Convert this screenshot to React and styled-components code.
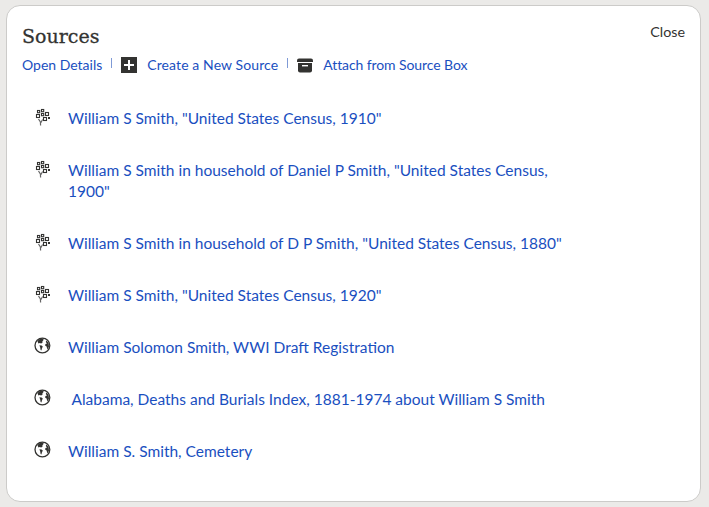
import styled, { createGlobalStyle } from 'styled-components';

const sources = [
    { icon: 'tree', text: 'William S Smith, "United States Census, 1910"' },
    { icon: 'tree', text: 'William S Smith in household of Daniel P Smith, "United States Census, 1900"' },
    { icon: 'tree', text: 'William S Smith in household of D P Smith, "United States Census, 1880"' },
    { icon: 'tree', text: 'William S Smith, "United States Census, 1920"' },
    { icon: 'globe', text: 'William Solomon Smith, WWI Draft Registration' },
    { icon: 'globe', text: '\u00a0Alabama, Deaths and Burials Index, 1881-1974 about William S Smith' },
    { icon: 'globe', text: 'William S. Smith, Cemetery' },
];

function TreeIcon() {
    return (
        <svg width="17" height="18" viewBox="0 0 17 18" fill="none" stroke="#333331" strokeWidth="1.1">
            <rect x="3.5" y="2.5" width="2.2" height="2.2" />
            <rect x="7.5" y="1.5" width="2.2" height="2.2" />
            <rect x="2.5" y="6.5" width="3" height="3" />
            <rect x="7.5" y="5.5" width="2.2" height="2.2" />
            <rect x="11.5" y="4.5" width="3" height="3" />
            <rect x="9.5" y="9.5" width="3" height="3" />
            <rect x="14" y="9" width="2" height="2" fill="#333331" stroke="none" />
            <path d="M4.5 11 L6.4 14 L6.6 17.5 M8.6 11.5 L6.8 14.8" stroke="#666" strokeWidth="1.2" />
        </svg>
    );
}

function GlobeIcon() {
    return (
        <svg width="17" height="17" viewBox="0 0 17 17">
            <circle cx="8.4" cy="8.5" r="7.4" fill="#fff" stroke="#333331" strokeWidth="1.3" />
            <path d="M3.4 4 L6 1.8 L9.6 1.6 L9.4 3.2 L8.4 4.2 L8.6 5.6 L7.2 6.6 L5.6 6 L4.4 6.4 Z" fill="#333331" />
            <path d="M5.4 8.2 L7.6 8.4 L8.8 9.6 L8 11.2 L7.4 13.4 L6.6 13 L6.2 10.4 Z" fill="#333331" />
            <path d="M12.2 3.4 L14.6 5.8 L15 9.4 L14 11.8 L13.2 12 L12.6 9.6 L11.2 8.8 L11.4 7 L13 6.4 L11.8 5 Z" fill="#333331" />
        </svg>
    );
}

function PlusIcon() {
    return (
        <svg width="16" height="16" viewBox="0 0 16 16">
            <rect width="16" height="16" fill="#333331" />
            <path d="M8 3v10M3 8h10" stroke="#fff" strokeWidth="2" />
        </svg>
    );
}

function BoxIcon() {
    return (
        <svg width="16" height="15" viewBox="0 0 16 15">
            <path d="M2 0.5 H14 Q16 0.5 16 2.5 V4 H0 V2.5 Q0 0.5 2 0.5 Z" fill="#333331" />
            <path d="M1 5 H15 V12.5 Q15 14.5 13 14.5 H3 Q1 14.5 1 12.5 Z" fill="#333331" />
            <rect x="5" y="7" width="6" height="1.4" fill="#fff" />
        </svg>
    );
}

function App() {
    return (
        <>
            <GlobalStyle />
            <Card>
                <Header>
                    <Title>Sources</Title>
                    <Close>Close</Close>
                </Header>
                <Actions>
                    <ActionLink>Open Details</ActionLink>
                    <Divider />
                    <IconSlot><PlusIcon /></IconSlot>
                    <ActionLink $track="0.1px">Create a New Source</ActionLink>
                    <Divider />
                    <IconSlot><BoxIcon /></IconSlot>
                    <ActionLink $track="-0.09px">Attach from Source Box</ActionLink>
                </Actions>
                <SourceList>
                    {sources.map((source) => (
                        <SourceRow key={source.text}>
                            <RowIcon>
                                {source.icon === 'tree' ? <TreeIcon /> : <GlobeIcon />}
                            </RowIcon>
                            <SourceLink>{source.text}</SourceLink>
                        </SourceRow>
                    ))}
                </SourceList>
            </Card>
        </>
    );
}

const GlobalStyle = createGlobalStyle`
    html, body {
        margin: 0;
        background: #ebeae8;
    }
    body {
        font-family: Lato, "Liberation Sans", sans-serif;
    }
`;

const Card = styled.div`
    box-sizing: border-box;
    width: 695px;
    height: 497px;
    margin: 5px 0 0 6px;
    padding: 17px 15px 0 15px;
    background: #fff;
    border: 1px solid #cccbc9;
    border-radius: 14px;
`;

const Header = styled.div`
    display: flex;
    justify-content: space-between;
    align-items: flex-start;
`;

const Title = styled.h2`
    margin: 0;
    font-family: "DejaVu Serif", serif;
    font-size: 19px;
    line-height: 26px;
    font-weight: 400;
    color: #333331;
    -webkit-text-stroke: 0.3px #333331;
`;

const Close = styled.span`
    font-size: 14.3px;
    line-height: 18px;
    color: #333331;
`;

const Actions = styled.div`
    display: flex;
    align-items: center;
    margin-top: 6px;
    height: 20px;
`;

const ActionLink = styled.a`
    font-size: 14px;
    line-height: 20px;
    color: #1a4fc0;
    letter-spacing: ${(props) => props.$track || 'normal'};
`;

const Divider = styled.span`
    width: 1px;
    height: 10px;
    margin: 0 9px 5px 9px;
    background: #7f9ad6;
`;

const IconSlot = styled.span`
    display: flex;
    width: 16px;
    margin-right: 10px;
`;

const SourceList = styled.div`
    display: flex;
    flex-direction: column;
    gap: 31px;
    margin-top: 33.3px;
    padding-left: 12px;
`;

const SourceRow = styled.div`
    display: flex;
    align-items: flex-start;
`;

const RowIcon = styled.span`
    display: flex;
    width: 34px;
    flex-shrink: 0;
`;

const SourceLink = styled.a`
    width: 515px;
    font-size: 15.5px;
    line-height: 20.9px;
    color: #1a4fc0;
`;

export default App;
